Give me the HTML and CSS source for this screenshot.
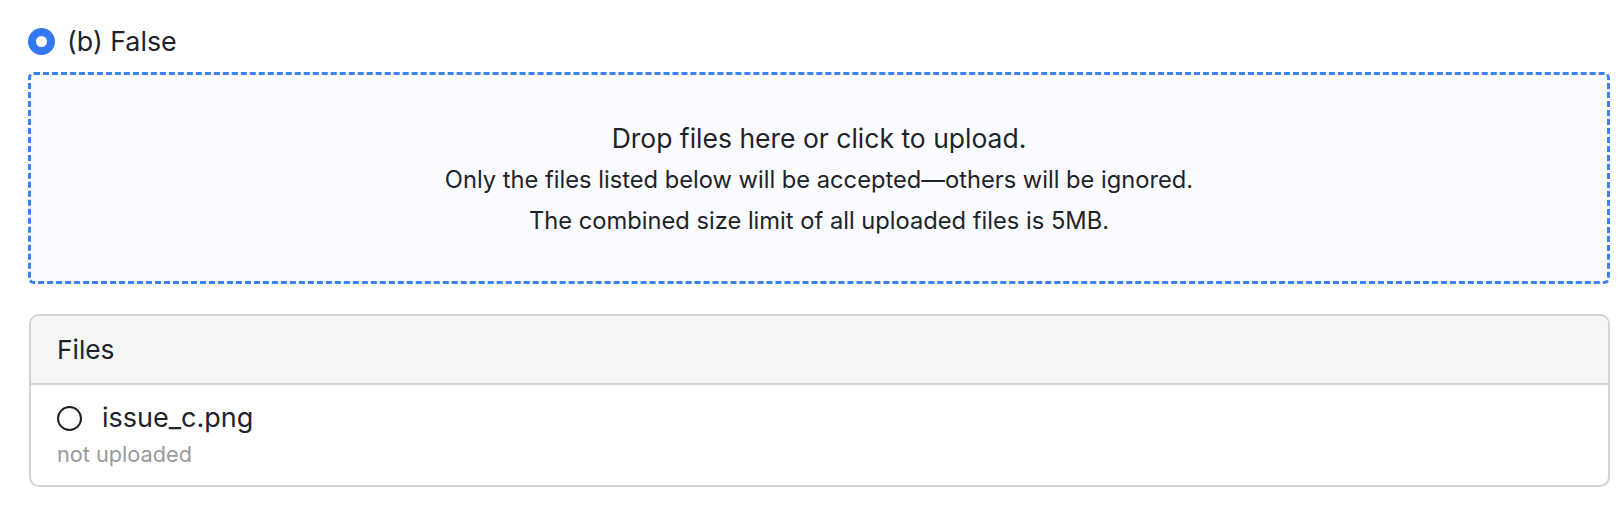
FILE: index.html
```html
<!DOCTYPE html>
<html lang="en">
<head>
<meta charset="utf-8">
<title>Upload</title>
<link rel="stylesheet" href="styles.css">
</head>
<body>
<div class="page">
  <label class="choice">
    <span class="radio-on"></span>
    <span class="choice-text">(b) False</span>
  </label>

  <div class="dropzone">
    <div class="drop-title">Drop files here or click to upload.</div>
    <div class="drop-note">Only the files listed below will be accepted—others will be ignored.</div>
    <div class="drop-note">The combined size limit of all uploaded files is 5MB.</div>
  </div>

  <div class="card">
    <div class="card-header">Files</div>
    <div class="card-body">
      <div class="file-row">
        <span class="radio-off"></span>
        <span class="file-name">issue_c.png</span>
      </div>
      <div class="file-status">not uploaded</div>
    </div>
  </div>
</div>
</body>
</html>
```

FILE: styles.css
```css
* { box-sizing: border-box; }

html, body {
  margin: 0;
  padding: 0;
  background: #ffffff;
}

body {
  font-family: Inter, "Noto Sans", "Liberation Sans", sans-serif;
  color: #1f2328;
}

.page {
  padding: 28px 14px 0 28px;
  display: flex;
  flex-direction: column;
}

.choice {
  display: flex;
  align-items: center;
  height: 27px;
  gap: 12px;
}

.radio-on {
  width: 27px;
  height: 27px;
  border-radius: 50%;
  background: #3478f6;
  display: flex;
  align-items: center;
  justify-content: center;
  flex: none;
}

.radio-on::after {
  content: "";
  width: 11px;
  height: 11px;
  border-radius: 50%;
  background: #ffffff;
}

.choice-text {
  font-size: 26.8px;
  line-height: 27px;
}

.dropzone {
  margin-top: 17px;
  border: 3px dashed #3b82f6;
  border-radius: 6px;
  background: #fafcff;
  padding: 43px 20px 40px;
  display: flex;
  flex-direction: column;
  align-items: center;
  text-align: center;
}

.drop-title {
  font-size: 26.5px;
  line-height: 41px;
}

.drop-note {
  font-size: 23.7px;
  line-height: 41px;
}

.card {
  margin-top: 30px;
  margin-left: 1px;
  border: 2px solid #d3d3d3;
  border-radius: 10px;
  overflow: hidden;
}

.card-header {
  background: #f5f5f5;
  border-bottom: 2px solid #d3d3d3;
  height: 69px;
  padding: 0 26px;
  display: flex;
  align-items: center;
  font-size: 26.3px;
}

.card-body {
  padding: 17px 26px 16px;
}

.file-row {
  display: flex;
  align-items: center;
  gap: 20px;
  height: 32px;
}

.radio-off {
  width: 25px;
  height: 25px;
  border-radius: 50%;
  border: 2px solid #1f1f1f;
  flex: none;
}

.file-name {
  font-size: 27px;
  line-height: 32px;
}

.file-status {
  font-size: 21.7px;
  line-height: 30px;
  color: #9a9a9a;
  margin-top: 5px;
}
```
